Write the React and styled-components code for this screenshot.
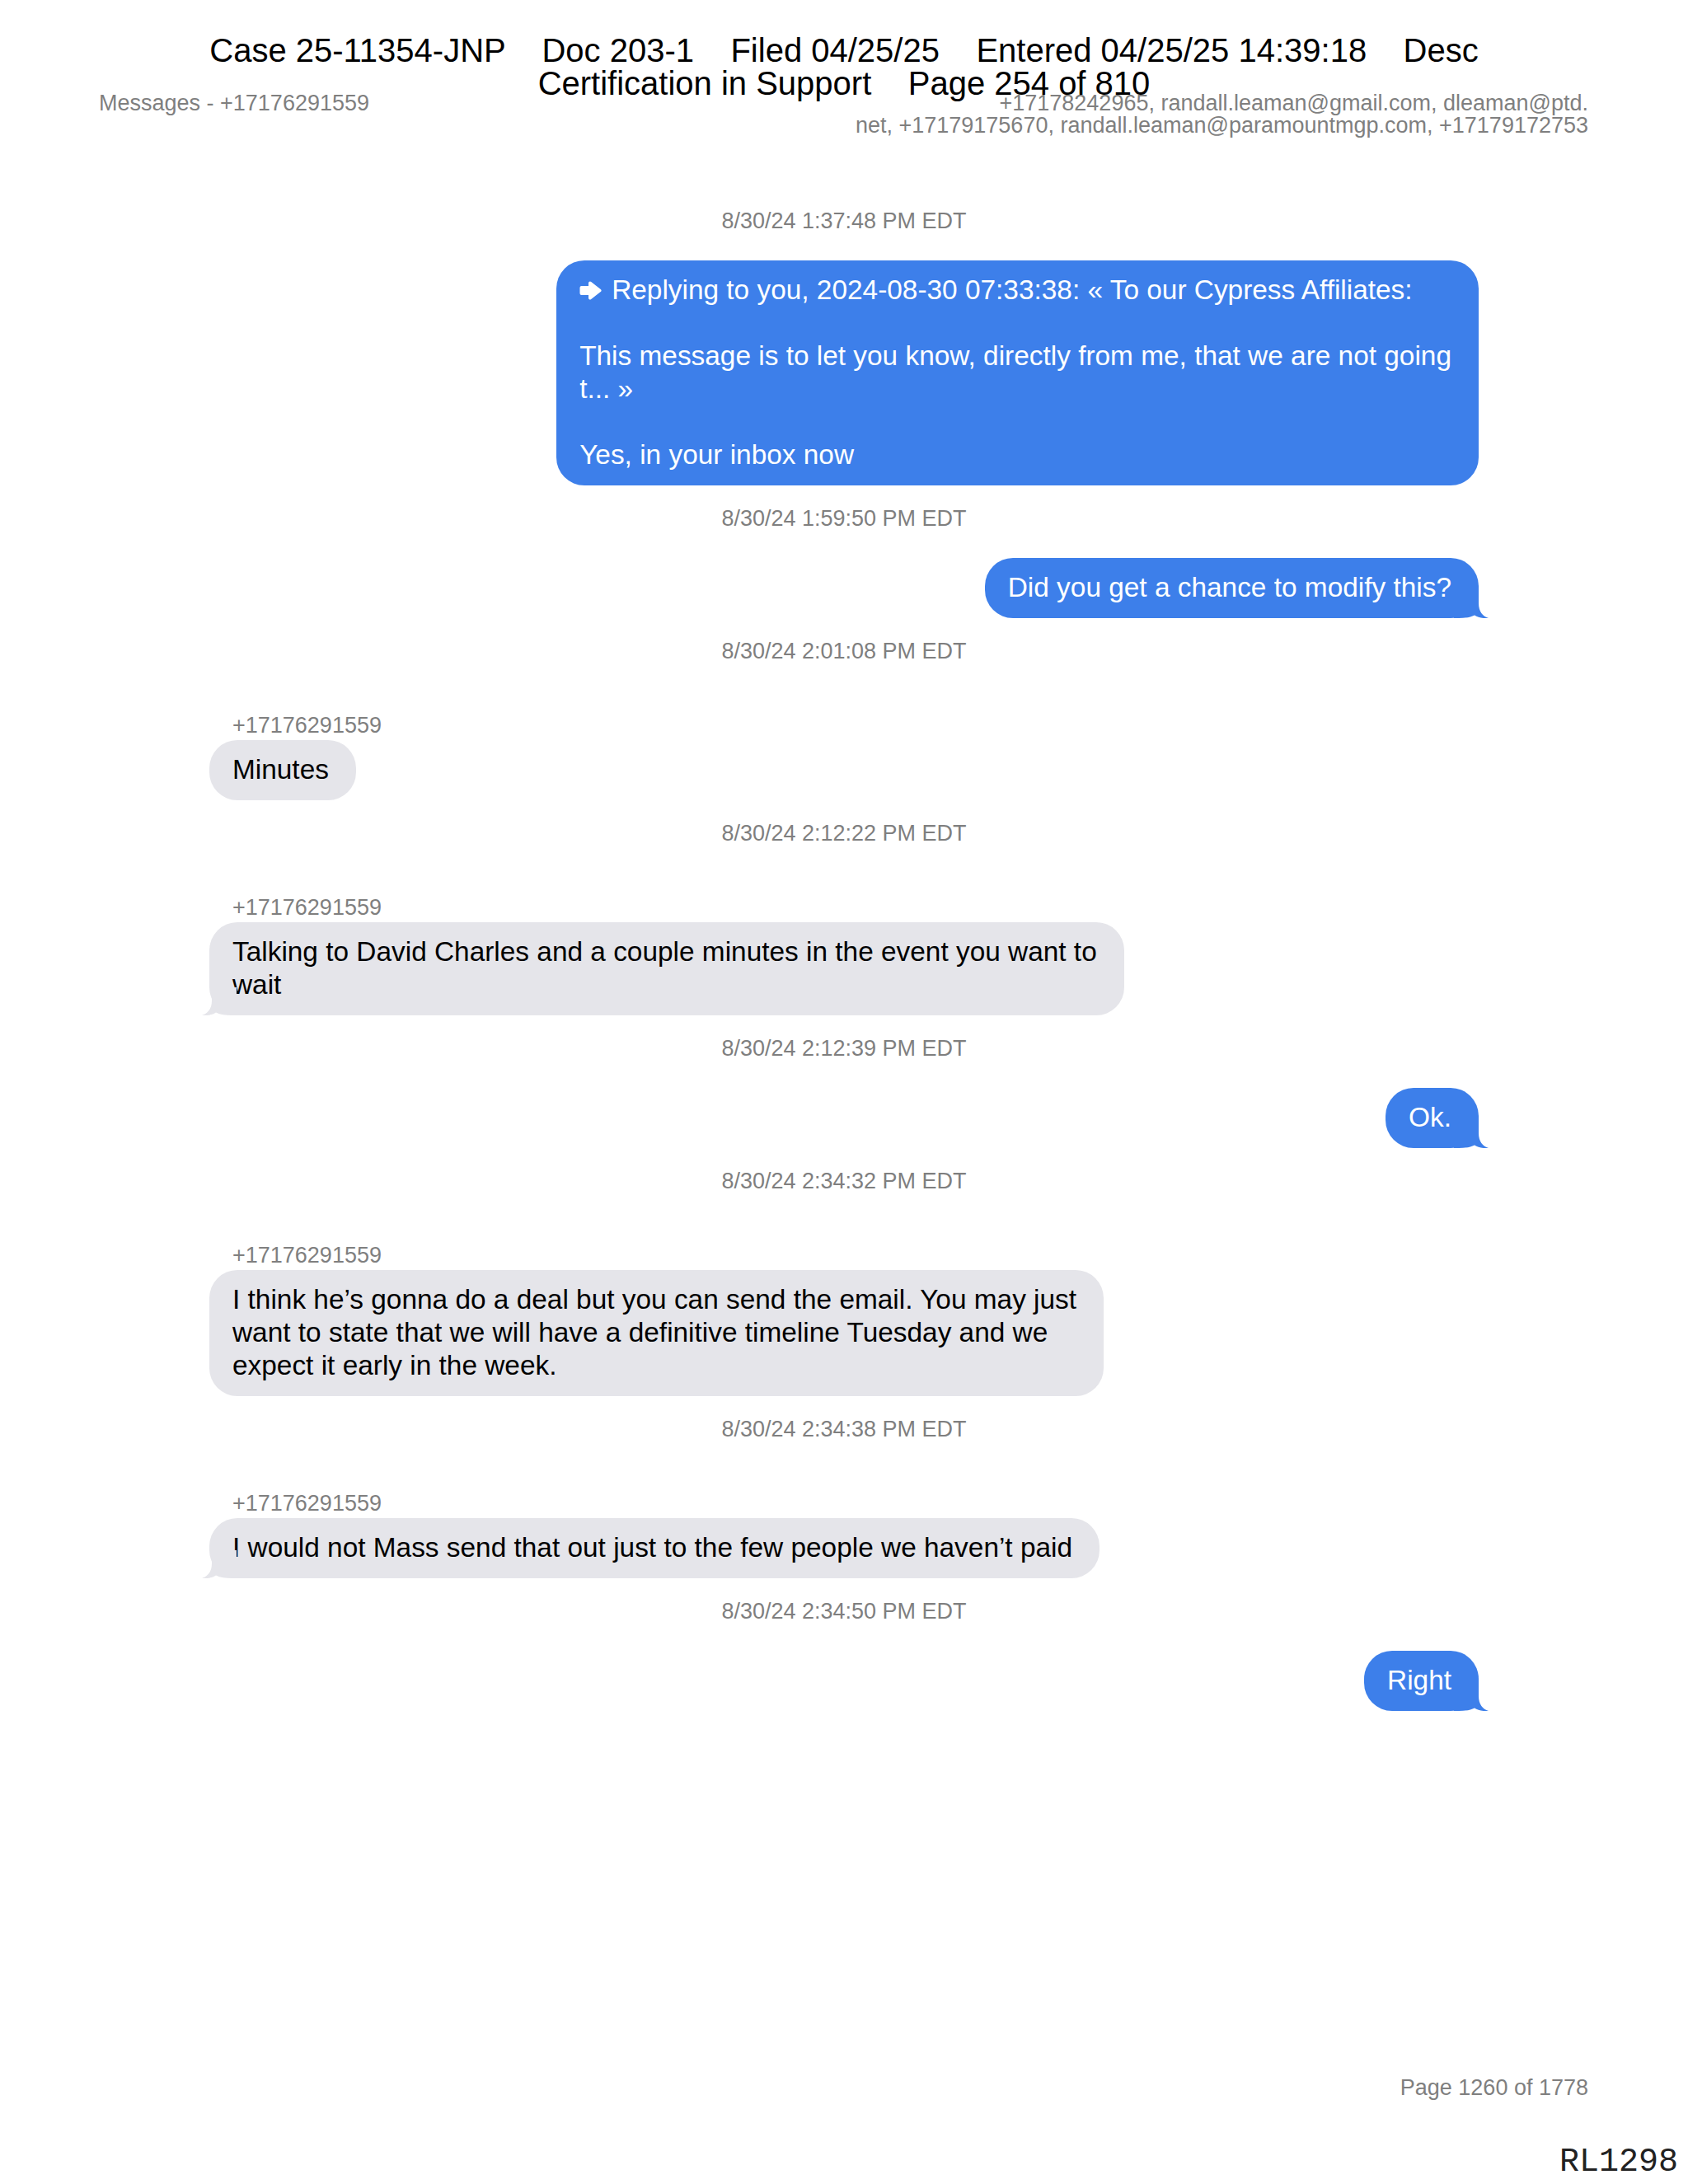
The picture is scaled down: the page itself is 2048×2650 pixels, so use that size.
import React from "react";
import styled, { createGlobalStyle } from "styled-components";

const GlobalStyle = createGlobalStyle`
  html, body {
    margin: 0;
    padding: 0;
    background: #ffffff;
  }
  body {
    font-family: "Liberation Sans", Arial, Helvetica, sans-serif;
  }
`;

const BLUE = "#3d7fea";
const GRAY_BUBBLE = "#e5e5ea";
const MUTED = "#7f7f7f";

const Page = styled.div`
  position: relative;
  width: 2048px;
  min-height: 2650px;
  display: flex;
  flex-direction: column;
  box-sizing: border-box;
  background: #fff;
`;

const Stamp = styled.div`
  position: absolute;
  top: 41px;
  left: 0;
  right: 0;
  text-align: center;
  font-size: 40px;
  line-height: 40px;
  color: #000;
  white-space: pre;
  pointer-events: none;
`;

const StampLine = styled.div``;

const HeaderRow = styled.header`
  display: flex;
  justify-content: space-between;
  align-items: flex-start;
  padding: 112px 121px 0 120px;
  font-size: 27px;
  line-height: 27px;
  color: ${MUTED};
`;

const HeaderLeft = styled.div`
  white-space: nowrap;
`;

const HeaderRight = styled.div`
  text-align: right;
  white-space: pre;
`;

const Thread = styled.main`
  width: 1540px;
  margin: 0 auto;
  padding-top: 62px;
  display: flex;
  flex-direction: column;
`;

const Timestamp = styled.div`
  margin-top: 24px;
  text-align: center;
  font-size: 27px;
  line-height: 32px;
  color: ${MUTED};
`;

const MessageRow = styled.div`
  display: flex;
  flex-direction: column;
  align-items: ${(p) => (p.$sent ? "flex-end" : "flex-start")};
  margin-top: ${(p) => (p.$sent ? "32px" : "58px")};
`;

const Sender = styled.div`
  font-size: 27px;
  line-height: 32px;
  color: ${MUTED};
  padding-left: 28px;
  margin-bottom: 2px;
`;

const Bubble = styled.div`
  position: relative;
  background: ${(p) => (p.$sent ? BLUE : GRAY_BUBBLE)};
  color: ${(p) => (p.$sent ? "#ffffff" : "#000000")};
  font-size: 33.4px;
  line-height: 40px;
  padding: 16px 33px 17px 28px;
  border-radius: 34px;
  white-space: pre;
`;

const TailSvg = styled.svg`
  position: absolute;
  bottom: 0;
  width: 42px;
  height: 34px;
  ${(p) =>
    p.$sent
      ? "right: -12px;"
      : "left: -9px; transform: scaleX(-1);"}
`;

const ReplyIcon = styled.svg`
  width: 27px;
  height: 23px;
  margin-right: 12px;
  vertical-align: -1px;
`;

const Footer = styled.footer`
  margin-top: auto;
  display: flex;
  flex-direction: column;
  align-items: flex-end;
  padding: 0 12px 4px 0;
`;

const PageNumber = styled.div`
  font-size: 27px;
  line-height: 32px;
  color: ${MUTED};
  margin-right: 109px;
`;

const Bates = styled.div`
  font-family: "Liberation Mono", "Courier New", monospace;
  font-size: 40px;
  line-height: 44px;
  color: #222;
  margin-top: 53px;
`;

function Tail({ sent }) {
  return (
    <TailSvg $sent={sent} viewBox="0 0 42 34" aria-hidden="true">
      <path
        d="M0,0 H30 V16 C30,26 35,32 42,34 C35,34.6 29,33.2 25,30.5 C20,33.2 13,34 6,34 H0 Z"
        fill={sent ? BLUE : GRAY_BUBBLE}
      />
    </TailSvg>
  );
}

function ArrowIcon() {
  return (
    <ReplyIcon viewBox="0 0 27 23" aria-hidden="true">
      <polygon
        points="2.5,8 13,8 13,2.5 24.5,11.5 13,20.5 13,15 2.5,15"
        fill="#fff"
        stroke="#fff"
        strokeWidth="4"
        strokeLinejoin="round"
      />
    </ReplyIcon>
  );
}

const conversation = [
  {
    time: "8/30/24 1:37:48 PM EDT",
    sent: true,
    reply: true,
    text:
      "Replying to you, 2024-08-30 07:33:38: « To our Cypress Affiliates:\n\nThis message is to let you know, directly from me, that we are not going\nt... »\n\nYes, in your inbox now",
    tail: false,
  },
  {
    time: "8/30/24 1:59:50 PM EDT",
    sent: true,
    text: "Did you get a chance to modify this?",
    tail: true,
  },
  {
    time: "8/30/24 2:01:08 PM EDT",
    sent: false,
    sender: "+17176291559",
    text: "Minutes",
    tail: false,
  },
  {
    time: "8/30/24 2:12:22 PM EDT",
    sent: false,
    sender: "+17176291559",
    text:
      "Talking to David Charles and a couple minutes in the event you want to\nwait",
    tail: true,
  },
  {
    time: "8/30/24 2:12:39 PM EDT",
    sent: true,
    text: "Ok.",
    tail: true,
  },
  {
    time: "8/30/24 2:34:32 PM EDT",
    sent: false,
    sender: "+17176291559",
    text:
      "I think he’s gonna do a deal but you can send the email. You may just\nwant to state that we will have a definitive timeline Tuesday and we\nexpect it early in the week.",
    tail: false,
  },
  {
    time: "8/30/24 2:34:38 PM EDT",
    sent: false,
    sender: "+17176291559",
    text: "I would not Mass send that out just to the few people we haven’t paid",
    tail: true,
  },
  {
    time: "8/30/24 2:34:50 PM EDT",
    sent: true,
    text: "Right",
    tail: true,
  },
];

export default function App() {
  return (
    <>
      <GlobalStyle />
      <Page>
        <HeaderRow>
          <HeaderLeft>Messages - +17176291559</HeaderLeft>
          <HeaderRight>
            {"+17178242965, randall.leaman@gmail.com, dleaman@ptd.\nnet, +17179175670, randall.leaman@paramountmgp.com, +17179172753"}
          </HeaderRight>
        </HeaderRow>

        <Thread>
          {conversation.map((m, i) => (
            <React.Fragment key={i}>
              <Timestamp>{m.time}</Timestamp>
              <MessageRow $sent={m.sent}>
                {m.sender && <Sender>{m.sender}</Sender>}
                <Bubble $sent={m.sent}>
                  {m.reply && <ArrowIcon />}
                  {m.text}
                  {m.tail && <Tail sent={m.sent} />}
                </Bubble>
              </MessageRow>
            </React.Fragment>
          ))}
        </Thread>

        <Footer>
          <PageNumber>Page 1260 of 1778</PageNumber>
          <Bates>RL1298</Bates>
        </Footer>

        <Stamp>
          <StampLine>
            {"Case 25-11354-JNP    Doc 203-1    Filed 04/25/25    Entered 04/25/25 14:39:18    Desc"}
          </StampLine>
          <StampLine>{"Certification in Support    Page 254 of 810"}</StampLine>
        </Stamp>
      </Page>
    </>
  );
}
